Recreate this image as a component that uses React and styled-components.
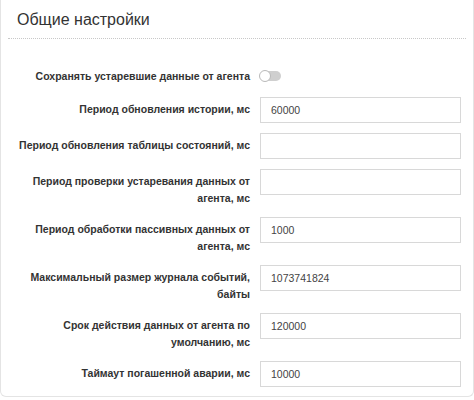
import React from "react";
import styled, { createGlobalStyle } from "styled-components";

const GlobalStyle = createGlobalStyle`
  html, body {
    margin: 0;
    padding: 0;
    background: #ffffff;
  }
  body {
    font-family: "Liberation Sans", Arial, sans-serif;
    color: #333;
  }
`;

const settings = [
  { label: "Период обновления истории, мс", value: "60000" },
  { label: "Период обновления таблицы состояний, мс", value: "" },
  { label: "Период проверки устаревания данных от агента, мс", value: "" },
  { label: "Период обработки пассивных данных от агента, мс", value: "1000" },
  { label: "Максимальный размер журнала событий, байты", value: "1073741824" },
  { label: "Срок действия данных от агента по умолчанию, мс", value: "120000" },
  { label: "Таймаут погашенной аварии, мс", value: "10000" },
];

function App() {
  return (
    <>
      <GlobalStyle />
      <Card>
        <Header>
          <Title>Общие настройки</Title>
        </Header>
        <Form>
          <Row $center>
            <Label $flat>Сохранять устаревшие данные от агента</Label>
            <Switch>
              <Knob />
            </Switch>
          </Row>
          {settings.map((item) => (
            <Row key={item.label}>
              <Label>{item.label}</Label>
              <Input type="text" defaultValue={item.value} />
            </Row>
          ))}
        </Form>
      </Card>
    </>
  );
}

const Card = styled.div`
  box-sizing: border-box;
  height: 397px;
  border: 1px solid #e4e4e4;
  border-top: none;
  border-radius: 0 0 6px 6px;
  background: #fff;
`;

const Header = styled.div`
  margin: 0 7px;
  padding: 10px 0 8px 9px;
  border-bottom: 1px dotted #c8c8c8;
`;

const Title = styled.h2`
  margin: 0;
  font-size: 16px;
  line-height: 20px;
  font-weight: normal;
  color: #333;
`;

const Form = styled.div`
  padding: 26px 0 0 16px;
`;

const Row = styled.div`
  display: grid;
  grid-template-columns: 233px 201px;
  column-gap: 10px;
  align-items: ${(p) => (p.$center ? "center" : "start")};
  margin-bottom: 10px;
`;

const Label = styled.label`
  text-align: right;
  font-size: 10.5px;
  font-weight: bold;
  line-height: 17px;
  padding-top: ${(p) => (p.$flat ? "0" : "4px")};
  color: #333;
`;

const Input = styled.input`
  box-sizing: border-box;
  height: 26px;
  width: 100%;
  margin: 0;
  padding: 0 10px;
  border: 1px solid #d8d8d8;
  border-radius: 0;
  font-family: "Liberation Sans", Arial, sans-serif;
  font-size: 10.5px;
  color: #444;
  outline: none;
`;

const Switch = styled.span`
  position: relative;
  display: block;
  width: 21px;
  height: 10px;
  margin: 6px 0;
  border-radius: 5px;
  background: #cfcfcf;
`;

const Knob = styled.span`
  position: absolute;
  left: -1px;
  top: -1px;
  width: 10px;
  height: 10px;
  border-radius: 50%;
  background: #fff;
  border: 1px solid #b9b9b9;
`;

export default App;
